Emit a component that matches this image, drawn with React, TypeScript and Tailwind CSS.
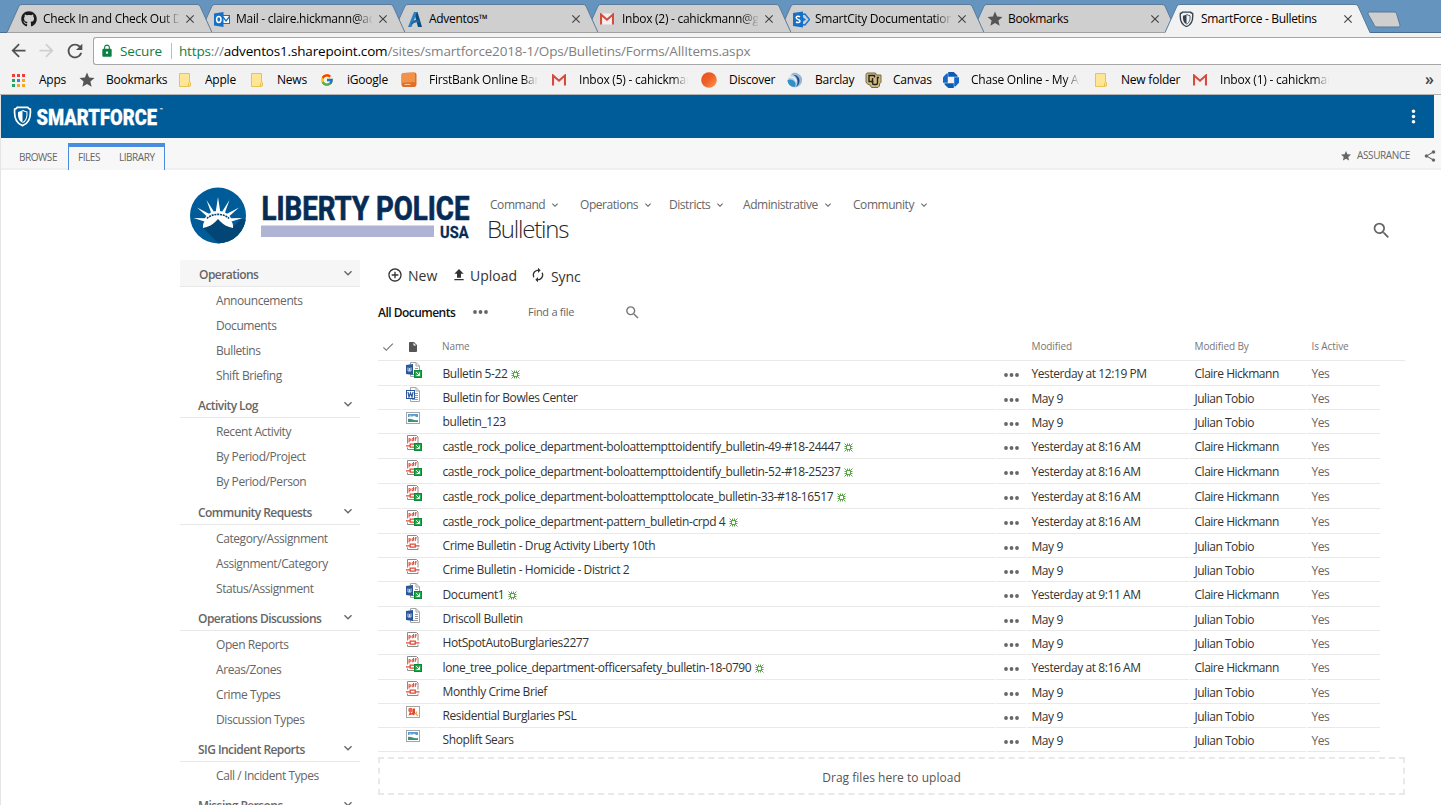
import type { ReactNode } from "react";
import { FaGithub } from "react-icons/fa";
import { FcGoogle } from "react-icons/fc";
import {
  MdAddCircleOutline,
  MdArrowBack,
  MdArrowForward,
  MdAutorenew,
  MdCheck,
  MdClose,
  MdFileUpload,
  MdInsertDriveFile,
  MdKeyboardArrowDown,
  MdLock,
  MdMoreVert,
  MdRefresh,
  MdSearch,
  MdShare,
  MdStar,
} from "react-icons/md";

/* ---------- small drawings ---------- */

const Gmail = () => (
  <svg width="14" height="12" viewBox="0 0 14 12">
    <rect x="1" y="0.5" width="12" height="11" fill="#f3efee" />
    <path d="M1 11.5V1.5l6 5.2 6-5.2v10" fill="none" stroke="#d54b3d" strokeWidth="2.1" />
  </svg>
);

const Outlook = () => (
  <svg width="16" height="15" viewBox="0 0 16 15">
    <rect x="8" y="3" width="8" height="9" fill="#1570c6" />
    <path d="M9 4h6v7H9z" fill="#fff" />
    <path d="M9 5l3 4 4-5" fill="none" stroke="#1570c6" strokeWidth="1.3" />
    <path d="M0 1.5L9.5 0v15L0 13.5z" fill="#1570c6" />
    <ellipse cx="4.8" cy="7.5" rx="2.2" ry="2.9" fill="none" stroke="#fff" strokeWidth="1.5" />
  </svg>
);

const Adventos = () => (
  <svg width="16" height="17" viewBox="0 0 16 17">
    <path d="M7 1h3.500l4.500 15h-4z" fill="#0c4d80" />
    <path d="M7 1h3L4.500 16H1z" fill="#2d7fc0" />
    <path d="M4 12.500c3-4 6-4.500 8-2.500l.6 2c-3-1.500-5-.5-8.600 2z" fill="#1a66a3" />
  </svg>
);

const SharePoint = () => (
  <svg width="17" height="17" viewBox="0 0 17 17">
    <path d="M9 3.500l3-.5 4.500 5.500L12 14l-3-.5z" fill="none" stroke="#1a78d0" strokeWidth="1.500" />
    <path d="M9 5.500l4 3-4 3z" fill="#1a78d0" />
    <path d="M0 2L10 .5v16L0 15z" fill="#1570c6" />
    <path
      d="M7 5.800C5.800 5 3.200 5 3.200 6.700c0 1.900 3.800 1.400 3.800 3.400 0 1.700-2.600 1.800-4 .9"
      fill="none"
      stroke="#fff"
      strokeWidth="1.500"
    />
  </svg>
);

const Shield = ({ size, color }: { size: number; color: string }) => (
  <svg width={size} height={size * 1.1} viewBox="0 0 20 22">
    <path
      d="M4.500 1.500h11c.4 1 1.300 1.600 2.700 1.700C19 11.500 17.500 18 10 20.700 2.500 18 1 11.500 1.800 3.200c1.400-.1 2.300-.7 2.700-1.700z"
      fill="none"
      stroke={color}
      strokeWidth="1.800"
    />
    <path d="M10 4.500v13C5.500 15.500 5 10.500 5.300 6.300 7 6 8.500 5.500 10 4.500z" fill={color} />
    <path
      d="M10 4.500c1.500 1 3 1.500 4.700 1.800.3 4.200-.2 9.200-4.700 11.200"
      fill="none"
      stroke={color}
      strokeWidth="1.100"
    />
  </svg>
);

const Folder = () => (
  <svg width="12" height="14" viewBox="0 0 12 14">
    <path d="M.5.500h10v9h1v3.500h-1.500V13.500H.5z" fill="#ffe596" stroke="#e9c352" />
    <path d="M9.500 10v3.500" stroke="#e9c352" />
  </svg>
);

const AppsGrid = () => (
  <svg width="13" height="13" viewBox="0 0 13 13">
    {["#ef3e36", "#ef3e36", "#ef3e36", "#1fa463", "#3b7ded", "#f7a823", "#1fa463", "#f7a823", "#f7a823"].map(
      (c, i) => (
        <rect key={i} x={(i % 3) * 5} y={Math.floor(i / 3) * 5} width="3" height="3" fill={c} />
      ),
    )}
  </svg>
);

const FirstBank = () => (
  <svg width="16" height="16" viewBox="0 0 16 16">
    <path d="M2.500 1l11-.5q2 0 2 2v10q0 2-2 2.500L2 15q-1.500-1-1.500-2.500V3q0-2 2-2z" fill="#df6f28" />
    <path d="M2.500 1l10-.5q1.500 0 1.500 2V10L.500 11V3q0-2 2-2z" fill="#f29148" />
    <path d="M3.500 12.500h6" stroke="#f8c79b" />
  </svg>
);

const Discover = () => (
  <svg width="16" height="16" viewBox="0 0 16 16">
    <defs>
      <linearGradient id="disc" x1="0" y1="0" x2="1" y2="1">
        <stop offset="0" stopColor="#e2501c" />
        <stop offset="0.500" stopColor="#f0622a" />
        <stop offset="1" stopColor="#f9a04a" />
      </linearGradient>
    </defs>
    <circle cx="8" cy="8" r="7.800" fill="url(#disc)" />
  </svg>
);

const Barclay = () => (
  <svg width="16" height="16" viewBox="0 0 16 16">
    <circle cx="8" cy="8.500" r="7" fill="#b9d0e6" />
    <path d="M4 1.500c5 0 8 3 8 7.500 0 2-.5 3.500-1.500 5 3.500-1 5-4 4.500-7.500C14 2.500 9-.5 4 1.500z" fill="#9db4d0" />
    <path d="M4 2.500c4 .5 7 3.500 6.500 8.500-.2 1.500-1 3-2 4 3-1 4-4 4-6.500C12.500 5 9 2 4 2.500z" fill="#1c4f8e" />
    <path d="M.500 8c3-1.500 7 0 8 3.500.3 1.500 0 2.500-1 3.500C3.500 15 .5 12 .5 8z" fill="#2f8fcb" />
    <path d="M2 5c3-.5 6 1 7.500 4.500" fill="none" stroke="#eef5fa" strokeWidth="1.400" />
  </svg>
);

const Canvas = () => (
  <svg width="17" height="16" viewBox="0 0 17 16">
    <path d="M2 1h8.500l1 2H16v7.500l-1.500 1V14l-1.500 1.500H6.500L5 13 2.500 12 1 10V2.500z" fill="#cfb87c" stroke="#77694a" />
    <path d="M9.500 5.500V3.500H4v6h4.500M7.500 6v5q0 1.500 1.500 1.500h2q1.500 0 1.500-1.500V5.500h1.500" fill="none" stroke="#222" strokeWidth="1.400" />
  </svg>
);

const Chase = () => (
  <svg width="16" height="16" viewBox="0 0 16 16">
    <path d="M5.200 0h5.500L14.500 3.500V4.800H5.200z" fill="#0d5cb4" />
    <path d="M16 5.200v5.500L12.500 14.500h-1.300V5.200z" fill="#1467c5" />
    <path d="M10.800 16H5.300L1.500 12.500v-1.300h9.300z" fill="#0d5cb4" />
    <path d="M0 10.800V5.300L3.500 1.500h1.300v9.300z" fill="#1467c5" />
  </svg>
);

const CheckOutBadge = () => (
  <g>
    <rect x="8.500" y="8.500" width="7" height="7" fill="#21a848" stroke="#0a8a30" />
    <path d="M10.200 10.200l3 3M13.500 10.500v3h-3" fill="none" stroke="#fff" />
  </g>
);

const FileIcon = ({ kind, out }: { kind: Kind; out?: boolean }) => (
  <svg width="16" height="17" viewBox="0 0 16 17" className="block">
    {(kind === "word" || kind === "wordx") && (
      <g>
        <path d="M4.500.5h5.500l3.500 3.500v10.500h-9z" fill="#fff" stroke="#a5a5a5" />
        <path d="M10 .5V4h3.500" fill="none" stroke="#a5a5a5" />
        <path d="M9 6.500h3M9 8.500h3M9 10.500h3M6 12.500h6" stroke="#9a9a9a" />
        {kind === "word" ? (
          <g>
            <path d="M0 3l7-1v11L0 12z" fill="#2b579a" />
            <path d="M2 5.500v3.500h3v-3.500M3.500 6v3" fill="none" stroke="#c9d8ee" />
          </g>
        ) : (
          <g>
            <rect x="0.500" y="3.500" width="8" height="8" fill="#fff" stroke="#2b579a" />
            <path d="M2 5l1 5 1.500-4L6 10l1-5" fill="none" stroke="#2b579a" strokeWidth="1.200" />
          </g>
        )}
      </g>
    )}
    {kind === "pdf" && (
      <g>
        <path d="M1.500.5h9l1.500 1.500v12.500h-10.500z" fill="#fff" stroke="#8a8a8a" />
        <path d="M0 8.500h14v4H0z" fill="#fff" />
        <path
          d="M3 3.200v4.300M3 3.700h1.300v2H3M7.500 2v3.700H6v-2h1.500M9.300 6V2.500h1.300M8.700 3.800h1.800"
          fill="none"
          stroke="#e0503f"
          strokeWidth="1"
        />
        <path d="M0 10.800h3.500M9.500 10.800h4M4.200 9.200h5v3h-5z" fill="none" stroke="#dd4b39" strokeWidth="1.300" />
      </g>
    )}
    {kind === "image" && (
      <g>
        <rect x="0.500" y="0.500" width="13" height="11" fill="#fff" stroke="#a5a5a5" />
        <path d="M2 2h10v3H2z" fill="#5b9bd0" />
        <path d="M3 4.500c1-1.500 2-1 3 0 1-1 3-1 4 .5z" fill="#fff" />
        <path d="M2 7c3-1 6 2 10 1v2H2z" fill="#3f8f7b" />
      </g>
    )}
    {kind === "bmp" && (
      <g>
        <rect x="0.500" y="0.500" width="13" height="11" fill="#fff" stroke="#a5a5a5" />
        <circle cx="4.500" cy="4" r="2.300" fill="#e8694a" />
        <path d="M2.500 9.500l1.500-4 2 2 1-5h2v5l-1 2-2-1z" fill="#dd4b2c" />
        <path d="M9 7l3 3M10.500 5.500v2" stroke="#f0a44b" strokeWidth="1.300" />
      </g>
    )}
    {out && <CheckOutBadge />}
  </svg>
);

const NewBadge = () => (
  <svg width="9" height="9" viewBox="0 0 9 9" className="block">
    <path
      d="M2.500 2.500h4v4h-4zM.5.500l2 2M8.500.500l-2 2M.5 8.500l2-2M8.500 8.500l-2-2M3.500.500v2M5.500.500v2M3.500 8.500v-2M5.500 8.500v-2M.5 3.500h2M.5 5.500h2M8.500 3.500h-2M8.500 5.500h-2"
      stroke="#4c9c38"
      strokeWidth="0.900"
      fill="none"
    />
  </svg>
);

const Dots = () => (
  <svg width="15" height="4" viewBox="0 0 15 4">
    <circle cx="2" cy="2" r="1.900" fill="#666" />
    <circle cx="7.500" cy="2" r="1.900" fill="#666" />
    <circle cx="13" cy="2" r="1.900" fill="#666" />
  </svg>
);

const LibertyLogo = () => (
  <svg width="281" height="58" viewBox="0 0 281 58" className="block">
    <defs>
      <clipPath id="disk">
        <circle cx="28" cy="28.500" r="28" />
      </clipPath>
    </defs>
    <circle cx="28" cy="28.500" r="28" fill="#005c99" />
    <path d="M13 41L30 58h30V33l-9-1-8 8-15-9z" fill="#014674" clipPath="url(#disk)" />
    <path
      d="M13 41c-.3-3 .3-5 1.500-6.500L3.500 31l11.500.3c.4-1 .9-1.700 1.500-2.300L7 20.500l12 6.300c.6-.5 1.300-1 2-1.300L16.500 13l7.300 11.600c.7-.2 1.300-.3 2-.3L28 10l2.200 14.300c.7 0 1.300.1 2 .3L39.500 13 35 25.500c.7.3 1.400.8 2 1.300l12-6.300-9.500 8.500c.6.600 1.100 1.300 1.500 2.300l11.500-.3-11 3.500c1.200 1.500 1.800 3.500 1.500 6.500-5-1-10-3-15-9-5 6-10 8-15 9z"
      fill="#fff"
    />
    <path d="M17 31.500C22 26 34 26 39 31.500" fill="none" stroke="#014674" strokeWidth="1.600" strokeDasharray="2 .8" />
    <text
      x="71.500"
      y="33"
      textLength="208"
      lengthAdjust="spacingAndGlyphs"
      fill="#062c55"
      stroke="#062c55"
      strokeWidth="0.700"
      className="font-['Roboto',sans-serif] text-[32.500px] font-bold"
    >
      LIBERTY POLICE
    </text>
    <rect x="71" y="38.500" width="173" height="11.500" fill="#afb4d4" />
    <text
      x="250"
      y="50.500"
      textLength="28.500"
      lengthAdjust="spacingAndGlyphs"
      fill="#062c55"
      stroke="#062c55"
      strokeWidth="0.300"
      className="font-['Roboto',sans-serif] text-[17px] font-bold"
    >
      USA
    </text>
  </svg>
);

/* ---------- browser chrome ---------- */

type Tab = { title: string; icon: ReactNode; fade?: boolean };

const tabs: Tab[] = [
  { title: "Check In and Check Out Documents", icon: <FaGithub size={16} color="#1b1b1b" />, fade: true },
  { title: "Mail - claire.hickmann@adventos.com", icon: <Outlook />, fade: true },
  { title: "Adventos™", icon: <Adventos /> },
  { title: "Inbox (2) - cahickmann@gmail.com", icon: <Gmail />, fade: true },
  { title: "SmartCity Documentation", icon: <SharePoint />, fade: true },
  { title: "Bookmarks", icon: <MdStar size={18} color="#555" /> },
  { title: "SmartForce - Bulletins", icon: <Shield size={15} color="#33424d" /> },
];

const tabLayers = ["z-[6]", "z-[5]", "z-[4]", "z-[3]", "z-[2]", "z-[1]", "z-[7]"];

const TabStrip = () => (
  <div className="flex h-[33px] border-b border-[#4b6e8e] bg-[#6595bf] pl-[7px]">
    {tabs.map((tab, i) => {
      const active = i === tabs.length - 1;
      return (
        <div key={tab.title} className={`relative flex h-[33px] w-[193px] shrink-0 items-center pt-[5px] pl-[14px] ${tabLayers[i]}`}>
          <svg width="206" height="33" viewBox="0 0 206 33" className="absolute top-0 left-0">
            <path
              d="M0 33L12 6Q13 4.500 15 4.500H190Q192 4.500 193 6L205 33z"
              fill={active ? "#f2f2f2" : "#cfcfcf"}
            />
            <path d="M0 32.500L12 6Q13 4.500 15 4.500H190Q192 4.500 193 6L205 32.500" fill="none" stroke="#5a7c9a" />
            {!active && <path d="M0 32.500H206" stroke="#a0a0a0" />}
          </svg>
          <div className="relative flex w-[22px] shrink-0 items-center">{tab.icon}</div>
          <div
            className={`relative w-[136px] overflow-hidden text-[12px] whitespace-nowrap text-black ${
              tab.fade
                ? "tracking-[-0.270px] [mask-image:linear-gradient(to_right,black_88%,transparent_101%)]"
                : "tracking-[-0.320px]"
            }`}
          >
            {tab.title}
          </div>
          <MdClose size={14} className="relative ml-[4px] shrink-0 text-[#444]" />
        </div>
      );
    })}
    <svg width="36" height="18" viewBox="0 0 36 18" className="mt-[11px] ml-[8px] shrink-0">
      <path d="M3 1h25q2 0 2.500 1.500L34 14q.5 2-1.500 2H11q-2 0-2.500-1.500L2 3q-.5-2 1-2z" fill="#cfcfcf" stroke="#55789a" />
    </svg>
  </div>
);

const AddressBar = () => (
  <div className="flex h-[33px] items-start bg-[#f2f2f2]">
    <MdArrowBack size={21} className="mt-[7px] ml-[8px] text-[#505050]" />
    <MdArrowForward size={21} className="mt-[7px] ml-[7px] text-[#cfcfcf]" />
    <MdRefresh size={22} className="mt-[7px] ml-[7px] text-[#505050]" />
    <div className="mt-[4px] ml-[7px] flex h-[28px] flex-1 items-center rounded-l-[3px] border border-r-0 border-[#a6a6a6] bg-white">
      <MdLock size={14} className="ml-[6px] text-[#0b8043]" />
      <span className="ml-[6px] w-[51px] text-[13.500px] tracking-[-0.150px] text-[#0b8043]">Secure</span>
      <span className="h-[16px] w-px bg-[#bdbdbd]" />
      <span className="ml-[7px] text-[13.500px] tracking-[-0.170px] whitespace-nowrap text-[#808080]">
        <span className="text-[#0b8043]">https</span>://
        <span className="text-black">adventos1.sharepoint.com</span>
        /sites/smartforce2018-1/Ops/Bulletins/Forms/AllItems.aspx
      </span>
    </div>
  </div>
);

type Bookmark = { label: string; icon: ReactNode; slot: string; gap: string; fade?: boolean };

const bookmarks: Bookmark[] = [
  { label: "Apps", icon: <AppsGrid />, slot: "w-[66px]", gap: "w-[27px]" },
  { label: "Bookmarks", icon: <MdStar size={18} color="#555" />, slot: "w-[101px]", gap: "w-[28px]" },
  { label: "Apple", icon: <Folder />, slot: "w-[72px]", gap: "w-[26px]" },
  { label: "News", icon: <Folder />, slot: "w-[69px]", gap: "w-[26px]" },
  { label: "iGoogle", icon: <FcGoogle size={14} />, slot: "w-[81px]", gap: "w-[27px]" },
  { label: "FirstBank Online Banking", icon: <FirstBank />, slot: "w-[151px]", gap: "w-[28px]", fade: true },
  { label: "Inbox (5) - cahickmann", icon: <Gmail />, slot: "w-[149px]", gap: "w-[27px]", fade: true },
  { label: "Discover", icon: <Discover />, slot: "w-[86px]", gap: "w-[28px]" },
  { label: "Barclay", icon: <Barclay />, slot: "w-[78px]", gap: "w-[28px]" },
  { label: "Canvas", icon: <Canvas />, slot: "w-[78px]", gap: "w-[28px]" },
  { label: "Chase Online - My Account", icon: <Chase />, slot: "w-[152px]", gap: "w-[28px]", fade: true },
  { label: "New folder", icon: <Folder />, slot: "w-[98px]", gap: "w-[26px]" },
  { label: "Inbox (1) - cahickmann", icon: <Gmail />, slot: "w-[149px]", gap: "w-[27px]", fade: true },
];

const BookmarksBar = () => (
  <div className="flex h-[29px] items-center overflow-hidden border-b border-[#b3b3b3] bg-[#f2f2f2] pr-[7px] pl-[12px]">
    {bookmarks.map((b) => (
      <div key={b.label} className={`flex shrink-0 items-center ${b.slot}`}>
        <div className={`shrink-0 ${b.gap}`}>{b.icon}</div>
        <div
          className={`min-w-0 overflow-hidden pr-px text-[12px] tracking-[-0.220px] whitespace-nowrap text-black ${
            b.fade ? "w-[109px] [mask-image:linear-gradient(to_right,black_86%,transparent_100%)]" : ""
          }`}
        >
          {b.label}
        </div>
      </div>
    ))}
    <span className="ml-auto pb-[3px] text-[16px] leading-none font-semibold text-[#444]">»</span>
  </div>
);

/* ---------- site header ---------- */

const SuiteBar = () => (
  <div className="mr-[7px] flex h-[43px] items-center justify-between bg-[#005c99] pr-[12px] pl-[12px]">
    <svg width="154" height="24" viewBox="0 0 154 24">
      <g transform="translate(0 1)">
        <Shield size={19} color="#fff" />
      </g>
      <text
        x="23.500"
        y="20"
        textLength="120.500"
        lengthAdjust="spacingAndGlyphs"
        fill="#fff"
        stroke="#fff"
        strokeWidth="0.300"
        className="font-['Roboto',sans-serif] text-[22.500px] font-black"
      >
        SMARTFORCE
      </text>
      <text x="146.500" y="7" fill="#fff" className="font-['Roboto',sans-serif] text-[5.500px] font-bold">
        ™
      </text>
    </svg>
    <MdMoreVert size={21} className="-mr-[2px] text-white" />
  </div>
);

const Ribbon = () => (
  <div className="flex h-[32px] justify-between border-b-2 border-[#efefef] bg-[#f7f7f7] text-[10px] tracking-[-0.450px] text-[#666]">
    <div className="flex">
      <div className="w-[67px] pt-[12px] pl-[18px] leading-[15px]">BROWSE</div>
      <div className="mt-[5px] flex h-[27px] w-[97px] border-x border-t-4 border-[#4a8de0] bg-[#f7f7f7] pt-[3px] leading-[15px]">
        <span className="ml-[9px] w-[41px]">FILES</span>
        <span>LIBRARY</span>
      </div>
    </div>
    <div className="flex items-start pt-[10px] leading-[15px]">
      <MdStar size={12} className="mt-[2px]" />
      <span className="ml-[5px] w-[66px] tracking-[-0.380px]">ASSURANCE</span>
      <MdShare size={14} className="mt-px mr-[4px]" />
    </div>
  </div>
);

const topNav = [
  { label: "Command", w: "w-[90px]" },
  { label: "Operations", w: "w-[89px]" },
  { label: "Districts", w: "w-[74px]" },
  { label: "Administrative", w: "w-[110px]" },
  { label: "Community", w: "w-[90px]" },
];

const SiteHeader = () => (
  <div className="flex h-[90px] pl-[189px]">
    <div className="mt-[17px] w-[300px]">
      <LibertyLogo />
    </div>
    <div className="-ml-px flex-1">
      <div className="mt-[26px] flex h-[18px] items-center pl-px">
        {topNav.map((n) => (
          <div key={n.label} className={`flex shrink-0 items-center text-[12px] tracking-[-0.450px] text-[#666] ${n.w}`}>
            {n.label}
            <MdKeyboardArrowDown size={12} className="ml-[4px]" />
          </div>
        ))}
      </div>
      <h1 className="-ml-[2px] text-[24px] leading-[30px] font-light tracking-[-1.200px] text-[#262626]">Bulletins</h1>
    </div>
    <MdSearch size={21} className="mt-[50px] mr-[49px] text-[#666]" />
  </div>
);

/* ---------- quick launch ---------- */

const sections = [
  {
    title: "Operations",
    items: ["Announcements", "Documents", "Bulletins", "Shift Briefing"],
    head: "bg-[#f6f6f6] pl-[19px]",
  },
  { title: "Activity Log", items: ["Recent Activity", "By Period/Project", "By Period/Person"], head: "mt-[2px] pl-[18px]" },
  {
    title: "Community Requests",
    items: ["Category/Assignment", "Assignment/Category", "Status/Assignment"],
    head: "mt-[3px] pl-[18px]",
  },
  {
    title: "Operations Discussions",
    items: ["Open Reports", "Areas/Zones", "Crime Types", "Discussion Types"],
    head: "mt-[2px] pl-[18px]",
  },
  { title: "SIG Incident Reports", items: ["Call / Incident Types"], head: "mt-[2px] pl-[18px]" },
  { title: "Missing Persons", items: [], head: "mt-[2px] pl-[18px]" },
];

const QuickLaunch = () => (
  <nav className="w-[180px] shrink-0 text-[12px] text-[#666]">
    {sections.map((s) => (
      <div key={s.title}>
        <div className={`flex h-[27px] items-center justify-between border-b border-[#e8e8e8] pr-[4px] ${s.head}`}>
          <span className="pt-[3px] font-semibold tracking-[-0.550px]">{s.title}</span>
          <MdKeyboardArrowDown size={16} />
        </div>
        <div className="pt-px pb-px">
          {s.items.map((item) => (
            <div key={item} className="h-[25px] pl-[36px] leading-[25px] tracking-[-0.420px]">
              {item}
            </div>
          ))}
        </div>
      </div>
    ))}
  </nav>
);

/* ---------- document library ---------- */

type Kind = "word" | "wordx" | "pdf" | "image" | "bmp";
type Doc = { name: string; kind: Kind; out?: boolean; modified: string; by: string };

const J = "Julian Tobio";
const C = "Claire Hickmann";

const docs: Doc[] = [
  { name: "Bulletin 5-22", kind: "word", out: true, modified: "Yesterday at 12:19 PM", by: C },
  { name: "Bulletin for Bowles Center", kind: "wordx", modified: "May 9", by: J },
  { name: "bulletin_123", kind: "image", modified: "May 9", by: J },
  {
    name: "castle_rock_police_department-boloattempttoidentify_bulletin-49-#18-24447",
    kind: "pdf",
    out: true,
    modified: "Yesterday at 8:16 AM",
    by: C,
  },
  {
    name: "castle_rock_police_department-boloattempttoidentify_bulletin-52-#18-25237",
    kind: "pdf",
    out: true,
    modified: "Yesterday at 8:16 AM",
    by: C,
  },
  {
    name: "castle_rock_police_department-boloattempttolocate_bulletin-33-#18-16517",
    kind: "pdf",
    out: true,
    modified: "Yesterday at 8:16 AM",
    by: C,
  },
  {
    name: "castle_rock_police_department-pattern_bulletin-crpd 4",
    kind: "pdf",
    out: true,
    modified: "Yesterday at 8:16 AM",
    by: C,
  },
  { name: "Crime Bulletin - Drug Activity Liberty 10th", kind: "pdf", modified: "May 9", by: J },
  { name: "Crime Bulletin - Homicide - District 2", kind: "pdf", modified: "May 9", by: J },
  { name: "Document1", kind: "word", out: true, modified: "Yesterday at 9:11 AM", by: C },
  { name: "Driscoll Bulletin", kind: "word", modified: "May 9", by: J },
  { name: "HotSpotAutoBurglaries2277", kind: "pdf", modified: "May 9", by: J },
  {
    name: "lone_tree_police_department-officersafety_bulletin-18-0790",
    kind: "pdf",
    out: true,
    modified: "Yesterday at 8:16 AM",
    by: C,
  },
  { name: "Monthly Crime Brief", kind: "pdf", modified: "May 9", by: J },
  { name: "Residential Burglaries PSL", kind: "bmp", modified: "May 9", by: J },
  { name: "Shoplift Sears", kind: "image", modified: "May 9", by: J },
];

const cols = "grid grid-cols-[23px_34px_558px_30px_162px_116px_73px] gap-x-px";
const cell = "border-b border-[#e9e9e9]";

const DocRow = ({ doc }: { doc: Doc }) => {
  const picture = doc.kind === "image" || doc.kind === "bmp";
  return (
    <div
      className={`${cols} text-[12px] leading-[18px] tracking-[-0.420px] whitespace-nowrap text-[#333] ${
        doc.out ? "h-[25px]" : "h-[24px]"
      }`}
    >
      <div className={cell} />
      <div className={`${cell} pl-[4px] ${picture ? "pt-[2px]" : "pt-px"}`}>
        <FileIcon kind={doc.kind} out={doc.out} />
      </div>
      <div className={`${cell} flex items-start gap-[4px] pl-[5.500px] ${doc.out ? "pt-[4px]" : "pt-[3px]"}`}>
        <span className="tracking-[-0.400px]">{doc.name}</span>
        {doc.out && (
          <span className="pt-[5px]">
            <NewBadge />
          </span>
        )}
      </div>
      <div className={`${cell} flex items-start pt-[12px] pl-[7.500px]`}>
        <Dots />
      </div>
      <div className={`${cell} pt-[4px] pl-[4.500px]`}>{doc.modified}</div>
      <div className={`${cell} pt-[4px] pl-[4.500px] tracking-[-0.480px]`}>{doc.by}</div>
      <div className={`${cell} pt-[4px] pl-[4.500px] text-[#666]`}>Yes</div>
    </div>
  );
};

const Library = () => (
  <main className="ml-[18px] w-[1027px]">
    <div className="flex h-[30px] items-center pl-[9px] text-[14px] text-[#333]">
      <MdAddCircleOutline size={16} />
      <span className="ml-[5px] w-[43px]">New</span>
      <MdFileUpload size={16} />
      <span className="ml-[3px] w-[60px]">Upload</span>
      <MdAutorenew size={16} />
      <span className="ml-[5px] pt-[2px] tracking-[-0.100px]">Sync</span>
    </div>
    <div className="flex h-[44px] items-center text-[12px]">
      <span className="w-[95px] pt-px font-semibold tracking-[-0.520px] text-[#111]">All Documents</span>
      <Dots />
      <span className="ml-[40px] w-[96px] text-[11px] tracking-[-0.280px] text-[#666]">Find a file</span>
      <MdSearch size={17} className="text-[#777]" />
    </div>
    <div className="h-[27px] border-b border-[#e9e9e9] text-[#777]">
      <div className={`${cols} text-[10px] leading-[24px] tracking-[-0.100px]`}>
        <MdCheck size={14} className="mt-[6px] ml-[3px]" />
        <MdInsertDriveFile size={12} className="mt-[7px] ml-[5px] text-[#555]" />
        <span className="pl-[5px]">Name</span>
        <span />
        <span className="pl-[4.500px]">Modified</span>
        <span className="pl-[4.500px]">Modified By</span>
        <span className="pl-[4.500px]">Is Active</span>
      </div>
    </div>
    {docs.map((d) => (
      <DocRow key={d.name} doc={d} />
    ))}
    <div className="mt-[5px] flex h-[38px] items-center justify-center border-2 border-dashed border-[#e9e9e9] pt-[4px] text-[12px] tracking-[0.020px] text-[#555]">
      Drag files here to upload
    </div>
  </main>
);

export default function App() {
  return (
    <div className="h-[805px] w-[1441px] overflow-hidden bg-white font-['Open_Sans','Noto_Sans',sans-serif]">
      <TabStrip />
      <AddressBar />
      <BookmarksBar />
      <div className="h-[710px] overflow-hidden border-l border-[#e4e4e4]">
        <div className="bg-[#f7f7f7]">
          <SuiteBar />
        </div>
        <Ribbon />
        <SiteHeader />
        <div className="flex pl-[179px]">
          <QuickLaunch />
          <Library />
        </div>
      </div>
    </div>
  );
}
